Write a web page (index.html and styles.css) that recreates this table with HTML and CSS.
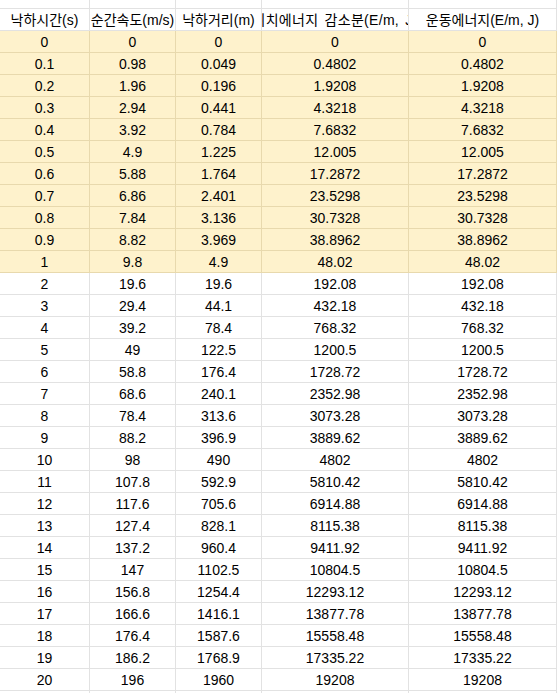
FILE: index.html
```html
<!DOCTYPE html>
<html lang="ko">
<head>
<meta charset="utf-8">
<title>낙하 에너지</title>
<link rel="stylesheet" href="styles.css">
</head>
<body>
<div class="sheet">
  <div class="row top"><div class="c"></div><div class="c"></div><div class="c"></div><div class="c"></div><div class="c"></div></div>
  <div class="row head">
    <div class="c"><span>낙하시간(s)</span></div>
    <div class="c"><span>순간속도(m/s)</span></div>
    <div class="c"><span>낙하거리(m)</span></div>
    <div class="c"><span class="wide">위치에너지 감소분(E/m, J)</span></div>
    <div class="c"><span>운동에너지(E/m, J)</span></div>
  </div>
  <div class="row hl"><div class="c">0</div><div class="c">0</div><div class="c">0</div><div class="c">0</div><div class="c">0</div></div>
  <div class="row hl"><div class="c">0.1</div><div class="c">0.98</div><div class="c">0.049</div><div class="c">0.4802</div><div class="c">0.4802</div></div>
  <div class="row hl"><div class="c">0.2</div><div class="c">1.96</div><div class="c">0.196</div><div class="c">1.9208</div><div class="c">1.9208</div></div>
  <div class="row hl"><div class="c">0.3</div><div class="c">2.94</div><div class="c">0.441</div><div class="c">4.3218</div><div class="c">4.3218</div></div>
  <div class="row hl"><div class="c">0.4</div><div class="c">3.92</div><div class="c">0.784</div><div class="c">7.6832</div><div class="c">7.6832</div></div>
  <div class="row hl"><div class="c">0.5</div><div class="c">4.9</div><div class="c">1.225</div><div class="c">12.005</div><div class="c">12.005</div></div>
  <div class="row hl"><div class="c">0.6</div><div class="c">5.88</div><div class="c">1.764</div><div class="c">17.2872</div><div class="c">17.2872</div></div>
  <div class="row hl"><div class="c">0.7</div><div class="c">6.86</div><div class="c">2.401</div><div class="c">23.5298</div><div class="c">23.5298</div></div>
  <div class="row hl"><div class="c">0.8</div><div class="c">7.84</div><div class="c">3.136</div><div class="c">30.7328</div><div class="c">30.7328</div></div>
  <div class="row hl"><div class="c">0.9</div><div class="c">8.82</div><div class="c">3.969</div><div class="c">38.8962</div><div class="c">38.8962</div></div>
  <div class="row hl"><div class="c">1</div><div class="c">9.8</div><div class="c">4.9</div><div class="c">48.02</div><div class="c">48.02</div></div>
  <div class="row"><div class="c">2</div><div class="c">19.6</div><div class="c">19.6</div><div class="c">192.08</div><div class="c">192.08</div></div>
  <div class="row"><div class="c">3</div><div class="c">29.4</div><div class="c">44.1</div><div class="c">432.18</div><div class="c">432.18</div></div>
  <div class="row"><div class="c">4</div><div class="c">39.2</div><div class="c">78.4</div><div class="c">768.32</div><div class="c">768.32</div></div>
  <div class="row"><div class="c">5</div><div class="c">49</div><div class="c">122.5</div><div class="c">1200.5</div><div class="c">1200.5</div></div>
  <div class="row"><div class="c">6</div><div class="c">58.8</div><div class="c">176.4</div><div class="c">1728.72</div><div class="c">1728.72</div></div>
  <div class="row"><div class="c">7</div><div class="c">68.6</div><div class="c">240.1</div><div class="c">2352.98</div><div class="c">2352.98</div></div>
  <div class="row"><div class="c">8</div><div class="c">78.4</div><div class="c">313.6</div><div class="c">3073.28</div><div class="c">3073.28</div></div>
  <div class="row"><div class="c">9</div><div class="c">88.2</div><div class="c">396.9</div><div class="c">3889.62</div><div class="c">3889.62</div></div>
  <div class="row"><div class="c">10</div><div class="c">98</div><div class="c">490</div><div class="c">4802</div><div class="c">4802</div></div>
  <div class="row"><div class="c">11</div><div class="c">107.8</div><div class="c">592.9</div><div class="c">5810.42</div><div class="c">5810.42</div></div>
  <div class="row"><div class="c">12</div><div class="c">117.6</div><div class="c">705.6</div><div class="c">6914.88</div><div class="c">6914.88</div></div>
  <div class="row"><div class="c">13</div><div class="c">127.4</div><div class="c">828.1</div><div class="c">8115.38</div><div class="c">8115.38</div></div>
  <div class="row"><div class="c">14</div><div class="c">137.2</div><div class="c">960.4</div><div class="c">9411.92</div><div class="c">9411.92</div></div>
  <div class="row"><div class="c">15</div><div class="c">147</div><div class="c">1102.5</div><div class="c">10804.5</div><div class="c">10804.5</div></div>
  <div class="row"><div class="c">16</div><div class="c">156.8</div><div class="c">1254.4</div><div class="c">12293.12</div><div class="c">12293.12</div></div>
  <div class="row"><div class="c">17</div><div class="c">166.6</div><div class="c">1416.1</div><div class="c">13877.78</div><div class="c">13877.78</div></div>
  <div class="row"><div class="c">18</div><div class="c">176.4</div><div class="c">1587.6</div><div class="c">15558.48</div><div class="c">15558.48</div></div>
  <div class="row"><div class="c">19</div><div class="c">186.2</div><div class="c">1768.9</div><div class="c">17335.22</div><div class="c">17335.22</div></div>
  <div class="row"><div class="c">20</div><div class="c">196</div><div class="c">1960</div><div class="c">19208</div><div class="c">19208</div></div>
  <div class="row tail"><div class="c"></div><div class="c"></div><div class="c"></div><div class="c"></div><div class="c"></div></div>
</div>
</body>
</html>
```
FILE: styles.css
```css
html, body {
  margin: 0;
  padding: 0;
  background: #ffffff;
}
body {
  font-family: "Liberation Sans", Arial, "Noto Sans CJK KR", sans-serif;
  font-size: 14px;
  color: #000000;
  overflow: hidden;
}
.sheet {
  width: 557px;
  height: 693px;
  overflow: hidden;
}
.row {
  display: grid;
  grid-template-columns: 90px 86px 86px 147px 148px;
  height: 22px;
}
.c {
  box-sizing: border-box;
  border-right: 1px solid #e2e2e2;
  border-bottom: 1px solid #e2e2e2;
  display: flex;
  justify-content: center;
  align-items: flex-end;
  padding-bottom: 2px;
  line-height: 16px;
  white-space: nowrap;
  overflow: hidden;
}
.row.top {
  height: 9px;
}
.row.tail {
  height: 10px;
}
.row.head .c {
  padding-bottom: 2px;
}
.wide {
  word-spacing: 2px;
  letter-spacing: 0.3px;
}
.row.hl .c {
  background: #fef2cc;
  border-color: #e8d9ad;
}
```
